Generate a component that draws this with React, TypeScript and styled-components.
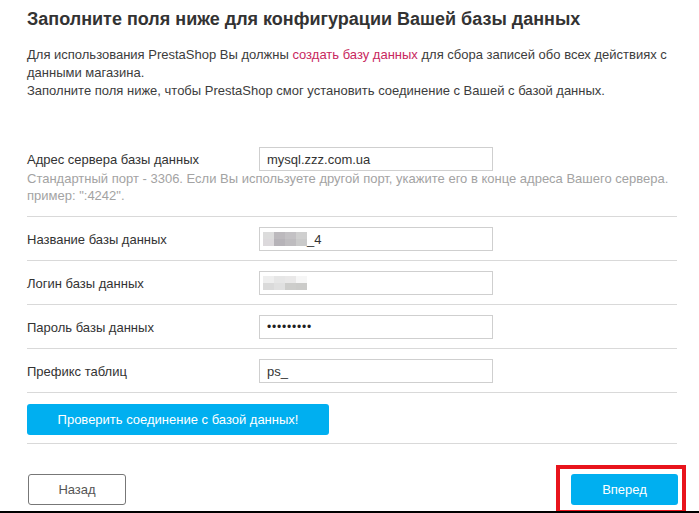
import React from "react";
import styled, { createGlobalStyle } from "styled-components";

const Global = createGlobalStyle`
  html, body { margin: 0; padding: 0; background: #fff; }
  body { font-family: "Liberation Sans", Arial, sans-serif; }
  * { box-sizing: border-box; }
`;

const Page = styled.div`
  height: 513px;
  overflow: hidden;
  border-bottom: 2px solid #000;
  padding: 0 22px 0 27px;
  color: #333;
`;

const Title = styled.h2`
  margin: 8px 0 0;
  font-size: 18px;
  line-height: 22px;
  font-weight: bold;
  color: #333;
`;

const Intro = styled.p`
  margin: 16px 0 0;
  font-size: 13px;
  line-height: 18px;
  color: #3c3c3c;
  white-space: nowrap;
`;

const Link = styled.a`
  color: #c8285e;
  text-decoration: none;
`;

const Form = styled.div`
  margin-top: 47px;
`;

const Row = styled.div<{ $first?: boolean }>`
  display: grid;
  grid-template-columns: 232px 234px 1fr;
  align-items: center;
  padding: ${(p) => (p.$first ? "0 0 12px" : "10px 0 9px")};
  border-bottom: 1px solid #d9d9d9;
`;

const Label = styled.label`
  font-size: 13px;
  color: #333;
`;

const Field = styled.div`
  height: 24px;
  border: 1px solid #cfcfcf;
  background: #fff;
  display: flex;
  align-items: center;
  padding-left: 7px;
  font-size: 13px;
  color: #333;
`;

const Hint = styled.div`
  grid-column: 1 / -1;
  margin-top: -1px;
  font-size: 13px;
  line-height: 17px;
  color: #a3a3a3;
  white-space: nowrap;
`;

const Blur = styled.span`
  display: inline-grid;
  grid-template-columns: repeat(4, 11px);
  grid-template-rows: 7px 7px;
  margin-left: -4px;
`;

const Px = styled.span<{ $c: string }>`
  background: ${(p) => p.$c};
`;

const Dots = styled.span`
  font-size: 12px;
  letter-spacing: 0.8px;
  color: #222;
`;

const ActionRow = styled.div`
  padding: 11px 0 8px;
  border-bottom: 1px solid #d9d9d9;
`;

const BlueButton = styled.button<{ $w: number }>`
  width: ${(p) => p.$w}px;
  height: 31px;
  border: none;
  border-radius: 3px;
  background: #00aff0;
  color: #fff;
  font-family: "Liberation Sans", Arial, sans-serif;
  font-size: 13px;
  padding: 0;
  cursor: pointer;
`;

const Footer = styled.div`
  display: flex;
  justify-content: space-between;
  align-items: center;
  padding-top: 21px;
`;

const BackButton = styled.button`
  width: 98px;
  height: 31px;
  margin-left: 1px;
  border: 1px solid #777;
  border-radius: 3px;
  background: #fff;
  color: #555;
  font-family: "Liberation Sans", Arial, sans-serif;
  font-size: 13px;
`;

const Highlight = styled.div`
  border: 4px solid #e8141c;
  padding: 5px 4px 5px 11px;
  margin-right: -9px;
`;

const blurA = ["#dcdcdc", "#bcb9bd", "#c3c1c4", "#cfcfcf", "#dcd9dc", "#b6b3b8", "#bebcbf", "#cacaca"];
const blurB = ["#eeeeee", "#e6e6e6", "#e9e8e8", "#f6f6f6", "#dadada", "#e0e0e0", "#cdcdcb", "#cbcbc9"];

const Pixels = ({ colors }: { colors: string[] }) => (
  <Blur>
    {colors.map((c, i) => (
      <Px key={i} $c={c} />
    ))}
  </Blur>
);

export default function App() {
  return (
    <>
      <Global />
      <Page>
        <Title>Заполните поля ниже для конфигурации Вашей базы данных</Title>
        <Intro>
          Для использования PrestaShop Вы должны <Link href="#">создать базу данных</Link> для сбора записей обо всех действиях с
          <br />
          данными магазина.
          <br />
          Заполните поля ниже, чтобы PrestaShop смог установить соединение с Вашей с базой данных.
        </Intro>
        <Form>
          <Row $first>
            <Label>Адрес сервера базы данных</Label>
            <Field>mysql.zzz.com.ua</Field>
            <Hint>
              Стандартный порт - 3306. Если Вы используете другой порт, укажите его в конце адреса Вашего сервера.
              <br />
              пример: ":4242".
            </Hint>
          </Row>
          <Row>
            <Label>Название базы данных</Label>
            <Field>
              <Pixels colors={blurA} />_4
            </Field>
          </Row>
          <Row>
            <Label>Логин базы данных</Label>
            <Field>
              <Pixels colors={blurB} />
            </Field>
          </Row>
          <Row>
            <Label>Пароль базы данных</Label>
            <Field>
              <Dots>•••••••••</Dots>
            </Field>
          </Row>
          <Row>
            <Label>Префикс таблиц</Label>
            <Field>ps_</Field>
          </Row>
          <ActionRow>
            <BlueButton $w={302}>Проверить соединение с базой данных!</BlueButton>
          </ActionRow>
        </Form>
        <Footer>
          <BackButton>Назад</BackButton>
          <Highlight>
            <BlueButton $w={107}>Вперед</BlueButton>
          </Highlight>
        </Footer>
      </Page>
    </>
  );
}
